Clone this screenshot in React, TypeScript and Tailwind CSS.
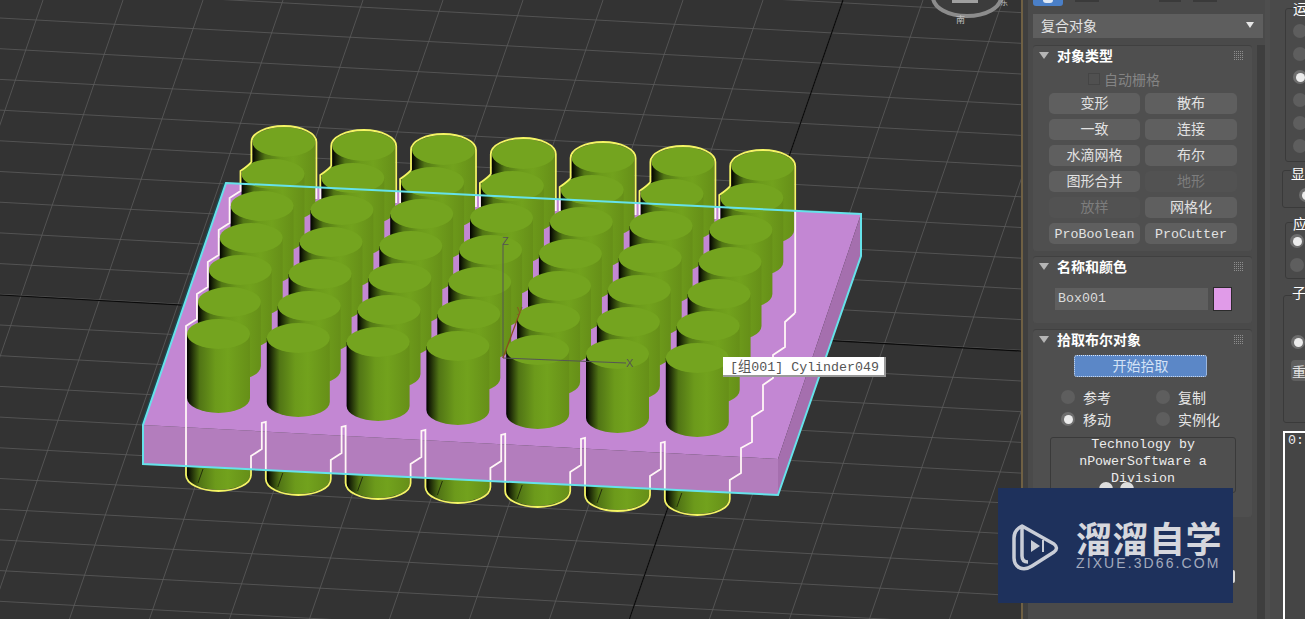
import React from 'react';

// scene geometry, read off the viewport
const COLS = [0, 1, 2, 3, 4, 5, 6];
const ROWS = [6, 5, 4, 3, 2, 1, 0];
const cx = (j: number, i: number) => 187 + 79.8 * j + 10.9 * i;
const ct = (j: number, i: number) => 319 + 4 * j - 32 * i;
const PLATE = '226,183 861,214 861,256 778,495 143,464 143,425';

const cylinderBody = (x: number, top: number) =>
  `M${x} ${top + 15} V${top + 79} A31.5 15 0 0 0 ${x + 63} ${top + 79} V${top + 15} Z`;

const buildOutline = () => {
  let d = '';
  // back row caps and the stems between columns, column 0 goes last so its stem runs on into the staircase
  [6, 5, 4, 3, 2, 1, 0].forEach((j) => {
    const x6 = cx(j, 6);
    const t6 = ct(j, 6);
    const x5 = cx(j, 5);
    const t5 = ct(j, 5);
    const right = j < 6 ? ct(j + 1, 5) + 36 : 313;
    d += `M${x6 - 1} ${t6 + 35} V${t6 + 15} A32.5 16 0 0 1 ${x6 + 64} ${t6 + 15} V${right} `;
    d += `M${x6 - 1} ${t6 + 35} Q${x6 - 3} ${t6 + 38} ${x5 - 1} ${t5 + 12} `;
    d += `V${j === 0 ? t5 + 32 : t5 + 36} `;
  });
  // left side staircase
  [4, 3, 2, 1, 0].forEach((i) => {
    const x = cx(0, i) - 1;
    const t = ct(0, i);
    d += `L${x} ${t + 7} `;
    if (i > 0) d += `V${t + 32} `;
  });
  // front row, bottoms under the plate
  COLS.forEach((j) => {
    const x = cx(j, 0);
    const base = 475 + 4 * j;
    d += `V${base} A32.5 16 0 0 0 ${x + 64} ${base} V${base - 19} `;
    if (j < 6) {
      const next = cx(j + 1, 0);
      const stem = 418 + 4 * (j + 1);
      d += `L${next - 5} ${base - 26} V${stem + 1} L${next - 1} ${stem} `;
    }
  });
  // right side staircase
  d += 'L741 473 V448 L752 442 V417 L763 410 V385 L773 378 V355 L785 347 V322 L795 313';
  return d;
};

const Scene = () => {
  const outline = buildOutline();
  const verticals = Array.from({ length: 22 }, (_, k) => 43 - 320 + 80 * k);
  const horizontals = Array.from({ length: 26 }, (_, k) => 18 + 30.7 * (k - 3));

  return (
    <svg viewBox="0 0 1021 619" className="block h-[619px] w-[1021px] shrink-0 bg-[#333333]">
      <defs>
        <linearGradient id="body" x1="0" x2="1" y1="0" y2="0">
          <stop offset="0" stopColor="#000000" />
          <stop offset="0.06" stopColor="#1a2507" />
          <stop offset="0.2" stopColor="#517515" />
          <stop offset="0.45" stopColor="#6c9a1b" />
          <stop offset="0.65" stopColor="#72a21d" />
          <stop offset="1" stopColor="#668f18" />
        </linearGradient>
        <clipPath id="inPlate">
          <polygon points={PLATE} />
        </clipPath>
        <clipPath id="outPlate">
          <path clipRule="evenodd" d={`M0 0 H1021 V619 H0 Z M${PLATE.replace(/ /g, ' L')} Z`} />
        </clipPath>
      </defs>

      {/* grid */}
      {verticals.map((x) => (
        <line key={x} x1={x} y1={0} x2={x - 0.345 * 619} y2={619} stroke="#5c5c5c" strokeWidth={0.8} />
      ))}
      {horizontals.map((y) => (
        <line key={y} x1={0} y1={y} x2={1021} y2={y + 56} stroke="#5c5c5c" strokeWidth={0.8} />
      ))}
      <line x1={0} y1={295} x2={1021} y2={351} stroke="#0a0a0a" strokeWidth={1.2} />
      <line x1={843} y1={0} x2={843 - 0.345 * 619} y2={619} stroke="#0a0a0a" strokeWidth={1.2} />

      {/* view cube */}
      <ellipse cx={967} cy={-3} rx={34} ry={19} fill="#3c3c3c" stroke="#8c8c8c" strokeWidth={4} />
      <rect x={952} y={-4} width={26} height={7} fill="#a0a0a0" />
      <text x={956} y={23} fontSize={9} fill="#bdbdbd" className="font-['Noto_Sans_CJK_SC',sans-serif]">
        南
      </text>
      <text x={1000} y={5} fontSize={8} fill="#bdbdbd" className="font-['Noto_Sans_CJK_SC',sans-serif]">
        东
      </text>

      {/* cylinder bottoms poking out under the plate */}
      {COLS.map((j) => {
        const x = cx(j, 0);
        const base = 475 + 4 * j;
        return (
          <g key={j}>
            <path d={`M${x} ${base - 40} V${base} A31.5 15 0 0 0 ${x + 63} ${base} V${base - 40} Z`} fill="url(#body)" />
            <line x1={203 + 79.8 * j} y1={469 + 4 * j} x2={198 + 79.8 * j} y2={483 + 4 * j} stroke="#22300a" strokeWidth={1} />
          </g>
        );
      })}

      {/* plate */}
      <polyline points="226,183 143,425" fill="none" stroke="#1d4a50" strokeWidth={5} />
      <polygon points="226,183 861,214 778,459 143,425" fill="#c387d3" />
      <polygon points="143,425 778,459 778,495 143,464" fill="#b37dbd" />
      <polygon points="861,214 861,256 778,495 778,459" fill="#a56fae" />

      {/* cylinders on top, back row first */}
      {ROWS.map((i) =>
        COLS.map((j) => {
          const x = cx(j, i);
          const top = ct(j, i);
          return (
            <g key={`${i}-${j}`}>
              <path d={cylinderBody(x, top)} fill="url(#body)" />
              <ellipse cx={x + 31.5} cy={top + 15} rx={31.5} ry={15} fill="#74a41f" />
            </g>
          );
        })
      )}

      {/* selection silhouette: white over the plate, yellow off it */}
      <path d={outline} fill="none" stroke="#fff6f6" strokeWidth={1.8} clipPath="url(#inPlate)" />
      <path d={outline} fill="none" stroke="#f4f564" strokeWidth={1.8} clipPath="url(#outPlate)" />
      <polygon points={PLATE} fill="none" stroke="#66e2ea" strokeWidth={2} />

      {/* gizmo */}
      <line x1={503} y1={245} x2={503} y2={358} stroke="#555555" strokeWidth={1} />
      <line x1={503} y1={358} x2={626} y2={363} stroke="#555555" strokeWidth={1} />
      <line x1={503} y1={358} x2={520} y2={312} stroke="#8a4a20" strokeWidth={1.2} />
      <text x={502} y={245} fontSize={11} fill="#555555" className="font-['Liberation_Sans',sans-serif]">
        Z
      </text>
      <text x={626} y={367} fontSize={11} fill="#555555" className="font-['Liberation_Sans',sans-serif]">
        X
      </text>
      <text x={517} y={313} fontSize={11} fill="#8a5a20" className="font-['Liberation_Sans',sans-serif]">
        y
      </text>
    </svg>
  );
};

const Grip = () => (
  <svg width="10" height="10" viewBox="0 0 10 10" className="shrink-0">
    {[0, 2, 4, 6, 8].map((y) =>
      [0, 2, 4, 6, 8].map((x) => <rect key={`${x}-${y}`} x={x} y={y} width={1} height={1} fill="#8d8d8d" />)
    )}
  </svg>
);

const Triangle = () => (
  <div className="h-0 w-0 shrink-0 border-x-[5px] border-t-[7px] border-x-transparent border-t-[#b5b5b5]" />
);

const Section = ({ title, className, children }: { title: string; className: string; children?: React.ReactNode }) => (
  <div className={`w-[219px] rounded-[3px] bg-[#4f4f4f] shadow-[inset_0_1px_0_#404040] ${className}`}>
    <div className="flex h-[21px] items-center pl-[6px] pr-[8px]">
      <Triangle />
      <span className="ml-[8px] flex-1 -translate-y-[1px] text-[14px] font-bold leading-none text-white">{title}</span>
      <Grip />
    </div>
    {children}
  </div>
);

const Radio = ({ on, className = '' }: { on?: boolean; className?: string }) => (
  <div className={`flex h-[14px] w-[14px] shrink-0 items-center justify-center rounded-full ${on ? 'bg-[#6e6e6e]' : 'bg-[#5e5e5e]'} ${className}`}>
    {on && <div className="h-[9px] w-[9px] rounded-full bg-[#ececec]" />}
  </div>
);

const objectButtons = [
  { label: '变形' },
  { label: '散布' },
  { label: '一致' },
  { label: '连接' },
  { label: '水滴网格' },
  { label: '布尔' },
  { label: '图形合并' },
  { label: '地形', off: true },
  { label: '放样', off: true },
  { label: '网格化' },
  { label: 'ProBoolean', mono: true },
  { label: 'ProCutter', mono: true },
];

const MONO = "font-['Liberation_Mono','Noto_Sans_CJK_SC',monospace]";

const CommandPanel = () => (
  <div className="flex h-[619px] w-[237px] shrink-0 flex-col pl-[5px]">
    {/* top tabs, mostly cut off by the crop */}
    <div className="flex h-[14px] items-start gap-[12px]">
      <div className="flex h-[6px] w-[30px] justify-center rounded-b-[3px] bg-[#4a7fc7]">
        <div className="h-[3px] w-[10px] rounded-b-full bg-[#dfe8f5]" />
      </div>
      <div className="h-[2px] w-[24px] bg-[#3a3a3a]" />
      <div className="ml-[48px] h-[2px] w-[22px] bg-[#3a3a3a]" />
      <div className="h-[2px] w-[24px] bg-[#3a3a3a]" />
    </div>

    <div className="flex h-[24px] w-[230px] items-center justify-between bg-[#5e5e5e] pb-[2px] pl-[8px] pr-[9px]">
      <span className="text-[14px] leading-none text-[#e2e2e2]">复合对象</span>
      <div className="h-0 w-0 border-x-[4px] border-t-[6px] border-x-transparent border-t-[#e6e6e6]" />
    </div>

    <div className="mt-[7px] flex min-h-0 flex-1">
      <div className="w-[219px]">
        <Section title="对象类型" className="h-[206px]">
          <div className="mt-[7px] flex h-[12px] items-center pl-[55px]">
            <div className="h-[12px] w-[12px] bg-[#505050] shadow-[inset_0_0_0_1px_#454545]" />
            <span className="ml-[4px] text-[14px] leading-none text-[#848484]">自动栅格</span>
          </div>
          <div className="mt-[8px] grid grid-cols-[91px_92px] gap-x-[5px] gap-y-[5px] pl-[16px]">
            {objectButtons.map((b) => (
              <div
                key={b.label}
                className={`flex h-[21px] items-center justify-center rounded-[5px] leading-none ${
                  b.off ? 'bg-[#525252] text-[#7d7d7d]' : 'bg-[#5f5f5f] text-[#e2e2e2]'
                } ${b.mono ? `${MONO} pt-[3px] text-[13.3px]` : 'pb-[3px] text-[14px]'}`}
              >
                {b.label}
              </div>
            ))}
          </div>
        </Section>

        <Section title="名称和颜色" className="mt-[5px] h-[67px]">
          <div className="mt-[10px] flex h-[24px] items-center gap-[5px] pl-[22px]">
            <div className={`flex h-[22px] w-[153px] items-center bg-[#5f5f5f] pl-[3px] text-[13.3px] leading-none text-[#dcdcdc] ${MONO}`}>
              Box001
            </div>
            <div className="h-[24px] w-[19px] border border-[#2b2b2b] bg-[#e09be8]" />
          </div>
        </Section>

        <Section title="拾取布尔对象" className="mt-[6px] h-[188px]">
          <div className="ml-[41px] mt-[5px] flex h-[22px] w-[133px] items-center justify-center rounded-[3px] border border-dotted border-[#dbe6f5] bg-[#5b87c7] pb-[3px] text-[14px] leading-none text-[#d3e2f6]">
            开始拾取
          </div>
          <div className="mt-[9px] grid grid-cols-[95px_95px] pl-[28px] text-[14px] leading-none text-[#e6e6e6]">
            {[
              { label: '参考' },
              { label: '复制' },
              { label: '移动', on: true },
              { label: '实例化' },
            ].map((r) => (
              <div key={r.label} className="flex h-[22px] items-center gap-[8px]">
                <Radio on={r.on} />
                <span>{r.label}</span>
              </div>
            ))}
          </div>
          <div className={`relative ml-[17px] mt-[7px] h-[56px] w-[186px] overflow-hidden rounded-[3px] border border-[#3a3a3a] text-center text-[13.3px] leading-[17px] text-[#ececec] ${MONO}`}>
            <div className="-mt-[2px]">
              Technology by
              <br />
              nPowerSoftware a
              <br />
              Division
            </div>
            <div className="absolute left-[48px] top-[44px] h-[14px] w-[14px] rounded-full bg-[#dddddd]" />
            <div className="absolute left-[69px] top-[44px] h-[14px] w-[14px] rounded-full bg-[#dddddd]" />
          </div>
        </Section>
      </div>
      <div className="ml-[5px] w-[8px] bg-[#3e3e3e]" />
    </div>
  </div>
);

const SideLabel = ({ text, className }: { text: string; className: string }) => (
  <span className={`absolute bg-[#4a4a4a] text-[14px] leading-none text-white ${className}`}>{text}</span>
);

const SideColumn = () => (
  <div className="h-[619px] w-[40px] shrink-0 overflow-hidden border-l-[5px] border-[#4e4e4e] text-[14px]">
    <div className="relative ml-[15px] mt-[8px] h-[154px] w-[40px] rounded-[3px] border border-[#3a3a3a]">
      <SideLabel text="运" className="left-[7px] -top-[8px]" />
      <div className="flex flex-col gap-[9px] pl-[7px] pt-[15px]">
        <Radio />
        <Radio />
        <Radio on />
        <Radio />
        <Radio />
        <Radio />
      </div>
    </div>
    <div className="relative ml-[12px] mt-[8px] h-[38px] w-[40px] rounded-[3px] border border-[#3a3a3a]">
      <SideLabel text="显" className="left-[8px] -top-[5px]" />
      <Radio on className="ml-[16px] mt-[17px]" />
    </div>
    <div className="relative ml-[15px] mt-[14px] h-[57px] w-[40px] rounded-[3px] border border-[#3a3a3a]">
      <SideLabel text="应" className="left-[7px] -top-[7px]" />
      <div className="flex flex-col gap-[10px] pl-[4px] pt-[11px]">
        <Radio on />
        <Radio />
      </div>
    </div>
    <div className="relative ml-[13px] mt-[16px] h-[128px] w-[40px] rounded-[3px] border border-[#3a3a3a]">
      <SideLabel text="子" className="left-[8px] -top-[11px]" />
      <Radio on className="ml-[7px] mt-[39px]" />
      <div className="ml-[7px] mt-[11px] flex h-[21px] items-center rounded-l-[4px] bg-[#5f5f5f] pl-[1px] leading-none text-[#e2e2e2]">
        重
      </div>
    </div>
    <div className={`ml-[13px] mt-[8px] h-[188px] border-l-2 border-t-2 border-white bg-[#454545] pl-[3px] text-[13.3px] leading-[16px] text-[#ececec] ${MONO}`}>
      0:
    </div>
  </div>
);

const Watermark = () => (
  <div className="absolute left-[998px] top-[488px] flex h-[115px] w-[235px] items-center bg-[#1e315c] pl-[13px]">
    <svg width="50" height="52" viewBox="1011 520 50 52" className="shrink-0" fill="none" stroke="#c9cdd7" strokeWidth="3.5" strokeLinejoin="round">
      <path d="M1022 526 L1054 544 Q1059 548 1054 552 L1032 566 Q1026 570 1020 568 Q1014 565 1014 558 L1014 538 Q1014 530 1022 526 V556 Q1022 562 1028 562" />
      <path d="M1031 540 L1040 546 L1031 552 Z" fill="#c9cdd7" stroke="none" />
      <rect x="1042" y="540" width="2" height="12" fill="#c9cdd7" stroke="none" />
    </svg>
    <div className="ml-[15px] flex flex-col pb-[2px]">
      <span className="text-[36px] font-bold leading-[36px] tracking-[0.5px] text-[#d6d7dd]">溜溜自学</span>
      <span className="mt-[1px] font-['Liberation_Sans',sans-serif] text-[14px] leading-[15px] tracking-[2.1px] text-[#a3aabd]">
        ZIXUE.3D66.COM
      </span>
    </div>
  </div>
);

const App = () => (
  <div className="relative flex h-[619px] w-[1305px] overflow-hidden bg-[#4a4a4a] font-['Noto_Sans_CJK_SC',sans-serif]">
    <Scene />
    <div className="w-[2px] shrink-0 bg-[#6f6044]" />
    <div className="w-[5px] shrink-0 bg-[#3f3f3f]" />
    <CommandPanel />
    <SideColumn />

    {/* hover tooltip */}
    <div className={`absolute left-[723px] top-[357px] flex h-[20px] w-[163px] items-center whitespace-pre border-b-2 border-r-2 border-[#9a9a9a] bg-white pl-[7px] pt-[3px] text-[13.3px] leading-none text-[#555555] ${MONO}`}>
      [组001] Cylinder049
    </div>

    <Watermark />
    <div className="absolute left-[1233px] top-[570px] h-[13px] w-[2px] rounded-r-full bg-[#d8d8d8]" />
  </div>
);

export default App;
